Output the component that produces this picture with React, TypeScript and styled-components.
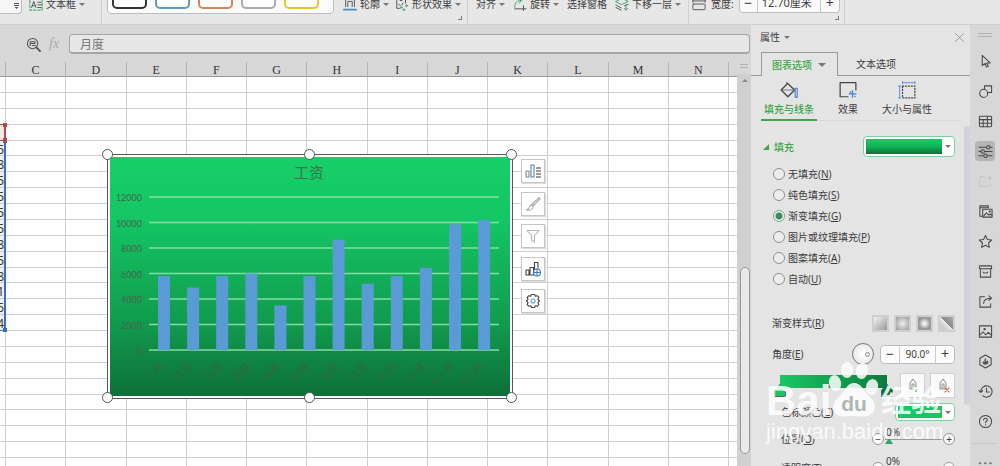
import React from "react";
import styled, { createGlobalStyle, css } from "styled-components";

const sans = `"Noto Sans", "Noto Sans CJK SC", sans-serif`;
const ink = "#3c3c3c";
const green = "#3fa648";

const Global = createGlobalStyle`
  *, *::before, *::after { box-sizing: border-box; }
  body { margin: 0; background: #e5e5e5; font-family: ${sans}; font-size: 10px; line-height: 14px; color: ${ink}; }
  button, input, select { font: inherit; color: inherit; margin: 0; padding: 0; border: 0; background: none; outline: 0; }
  button { cursor: pointer; }
`;

/* ---------- frame ---------- */
const Page = styled.div`
  display: flex;
  flex-direction: column;
  height: 100vh;
  overflow: hidden;
`;
const Body = styled.div`
  flex: 1;
  min-height: 0;
  display: flex;
`;

/* ---------- ribbon ---------- */
const Ribbon = styled.header`
  flex: none;
  height: 25px;
  display: flex;
  align-items: flex-end;
  overflow: hidden;
  background: #e7e7e7;
  border-bottom: 1px solid #cecece;
`;
const Group = styled.div<{ $gap: number; $left?: number; $right?: number; $line?: boolean }>`
  position: relative;
  flex: none;
  height: 40px;
  display: flex;
  align-items: center;
  gap: ${(p) => p.$gap}px;
  padding-left: ${(p) => p.$left ?? 0}px;
  padding-right: ${(p) => p.$right ?? 0}px;
  border-right: ${(p) => (p.$line ? "1px solid #cfcfcf" : "0")};
`;
const RibbonButton = styled.button`
  flex: none;
  display: flex;
  align-items: center;
  gap: 3px;
  white-space: nowrap;
`;
const Caret = styled.span<{ $size?: number }>`
  flex: none;
  border: ${(p) => p.$size ?? 3}px solid transparent;
  border-top-color: #777;
  border-bottom: 0;
`;
const ComboEnd = styled.button`
  align-self: flex-start;
  width: 22px;
  height: 30px;
  padding: 0 2px 4px 0;
  display: flex;
  align-items: flex-end;
  justify-content: flex-end;
  background: #f6f6f6;
  border: 1px solid #bdbdbd;
  border-left: 0;
  border-radius: 0 0 4px 0;
`;
const Gallery = styled.div`
  align-self: flex-start;
  height: 30px;
  display: flex;
  gap: 8px;
  padding: 0 14px 4px 4px;
  background: #fbfbfb;
  border: 1px solid #bdbdbd;
  border-radius: 4px;
`;
const Swatch = styled.button<{ $color: string }>`
  width: 35px;
  background: #fff;
  border: 2px solid ${(p) => p.$color};
  border-radius: 5px;
`;
const Launcher = styled.span`
  position: absolute;
  right: 5px;
  bottom: 4px;
  width: 4px;
  height: 4px;
  border: solid #777;
  border-width: 0 1px 1px 0;
`;
const WidthBox = styled.div`
  align-self: flex-start;
  height: 29px;
  padding-top: 9px;
  display: flex;
  background: #fafafa;
  border: 1px solid #bdbdbd;
  border-radius: 4px;
`;
const WidthInput = styled.input`
  width: 64px;
  padding: 0 4px;
  font-size: 11px;
  border: solid #c8c8c8;
  border-width: 0 1px;
`;
const Step = styled.button<{ $w: number }>`
  width: ${(p) => p.$w}px;
  font-size: 14px;
  line-height: 16px;
`;

/* ---------- worksheet ---------- */
const Workspace = styled.main`
  flex: 1;
  min-width: 0;
  display: flex;
  flex-direction: column;
  background: #d7d7d7;
`;
const FormulaBar = styled.div`
  flex: none;
  display: flex;
  align-items: center;
  padding: 9px 1px 8px 26px;
`;
const Fx = styled.span`
  width: 28px;
  padding-left: 8px;
  font: italic 14px "Liberation Serif", serif;
  color: #aaa;
`;
const FormulaInput = styled.input`
  flex: 1;
  min-width: 0;
  height: 20px;
  padding: 0 10px;
  font-size: 12px;
  color: #777;
  background: #e7e7e7;
  border: 1px solid #a5a5a5;
  border-bottom-width: 2px;
  border-radius: 4px;
`;
const SheetRow = styled.div`
  flex: 1;
  min-height: 0;
  display: flex;
`;
const Sheet = styled.div`
  position: relative;
  flex: 1;
  min-width: 0;
  overflow: hidden;
`;
const Table = styled.table`
  display: flex;
  flex-direction: column;
  height: calc(100% + 8px);
  thead { flex: none; display: block; }
  tbody { flex: 1; display: flex; flex-direction: column; background: #fff; }
  tr { display: flex; }
  tbody tr { flex: 1; min-height: 0; }
`;
const Head = styled.th<{ $w?: number }>`
  ${(p) => (p.$w ? css`flex: 0 0 ${p.$w}px;` : css`flex: 1;`)}
  height: 15px;
  padding: 0;
  font: 12px/17px "Liberation Serif", serif;
  color: #333;
  border-right: 1px solid #b4b4b4;
  border-bottom: 1px solid #9a9a9a;
  &:last-child { border-right: 0; }
`;
const Cell = styled.td<{ $w?: number; $fill?: string }>`
  ${(p) => (p.$w ? css`flex: 0 0 ${p.$w}px;` : css`flex: 1;`)}
  min-width: 0;
  padding: 0;
  border-right: 1px solid #cfcfcf;
  border-bottom: 1px solid #cfcfcf;
  background: ${(p) => p.$fill ?? "transparent"};
  &:last-child { border-right: 0; }
`;
const Digit = styled.span`
  display: flex;
  justify-content: flex-end;
  width: 4px;
  height: 100%;
  overflow: hidden;
  font-size: 12px;
  line-height: 18px;
`;
const Range = styled.div<{ $color: string; $top: number; $h: number }>`
  position: absolute;
  left: -10px;
  width: 16px;
  top: ${(p) => p.$top}px;
  height: ${(p) => p.$h}px;
  border: 1px solid ${(p) => p.$color};
  border-right-width: 2px;
  &::before, &::after {
    content: "";
    position: absolute;
    right: -3px;
    width: 4px;
    height: 4px;
    background: ${(p) => p.$color};
  }
  &::before { top: -2px; }
  &::after { bottom: -2px; }
`;
const Gutter = styled.div`
  flex: none;
  width: 14px;
  display: flex;
  flex-direction: column;
  align-items: center;
`;
const Grip = styled.span<{ $w: number; $top?: number }>`
  flex: none;
  width: ${(p) => p.$w}px;
  height: 4px;
  margin-top: ${(p) => p.$top ?? 0}px;
  border: solid #b3b3b3;
  border-width: 1px 0;
`;
const Track = styled.div`
  flex: 1;
  align-self: stretch;
  margin-top: 6px;
  padding: 5px 1px 12px 3px;
  display: flex;
  flex-direction: column;
  align-items: center;
  background: #d0d0d0;
`;
const ArrowUp = styled.span`
  border: 3px solid transparent;
  border-top: 0;
  border-bottom-color: #888;
`;
const Thumb = styled.div`
  align-self: stretch;
  margin-top: auto;
  height: 50%;
  background: #e9e9e9;
  border: 1px solid #999;
  border-radius: 5px;
`;

/* ---------- floating chart ---------- */
const ChartObject = styled.div`
  position: absolute;
  left: 107px;
  top: 92px;
  width: 406px;
  height: 245px;
  padding: 2px;
  background: #fff;
  border: 1px solid #555;
  svg { display: block; }
`;
const Handle = styled.span<{ $x: number; $y: number }>`
  position: absolute;
  left: ${(p) => p.$x}%;
  top: ${(p) => p.$y}%;
  width: 11px;
  height: 11px;
  margin: -6px;
  background: #fff;
  border: 1px solid #555;
  border-radius: 50%;
`;
const ChartTools = styled.div`
  position: absolute;
  left: 521px;
  top: 97px;
  height: 154px;
  display: flex;
  flex-direction: column;
  justify-content: space-between;
`;
const ChartTool = styled.button`
  width: 24px;
  height: 24px;
  display: grid;
  place-items: center;
  background: #fff;
  border: 1px solid #c6c6c6;
  box-shadow: 1px 1px 1px #ddd;
`;

/* ---------- property panel ---------- */
const Panel = styled.aside`
  position: relative;
  flex: 0 0 219px;
  display: flex;
  flex-direction: column;
  overflow: hidden;
  background: #e4e4e4;
`;
const PanelTitle = styled.div`
  flex: none;
  height: 27px;
  padding: 0 5px 3px 9px;
  display: flex;
  align-items: center;
  gap: 4px;
  button { margin-left: auto; display: flex; }
`;
const Tabs = styled.div`
  flex: none;
  height: 24px;
  display: flex;
  &::before { content: ""; width: 10px; border-bottom: 1px solid #999; }
`;
const Tab = styled.button<{ $on?: boolean }>`
  display: flex;
  align-items: center;
  gap: 6px;
  ${(p) =>
    p.$on
      ? css`
          width: 77px;
          padding-left: 10px;
          color: ${green};
          font-weight: 500;
          border: 1px solid #999;
          border-bottom: 0;
        `
      : css`
          flex: 1;
          padding-left: 18px;
          border-bottom: 1px solid #999;
        `}
`;
const SubTabs = styled.div`
  flex: none;
  display: flex;
  margin: 0 9px 0 10px;
  border-bottom: 1px solid #d8d8d8;
`;
const SubTab = styled.button<{ $on?: boolean }>`
  height: 45px;
  margin-bottom: -1px;
  padding: 5px 3px 2px;
  display: flex;
  flex-direction: column;
  align-items: center;
  gap: 3px;
  color: ${(p) => (p.$on ? green : ink)};
  font-weight: ${(p) => (p.$on ? 500 : 400)};
  border-bottom: 2px solid ${(p) => (p.$on ? green : "transparent")};
  & + & { margin-left: 18px; }
`;
const PanelBody = styled.div`
  flex: 1;
  min-height: 0;
  display: flex;
`;
const Form = styled.div`
  flex: 1;
  min-width: 0;
  padding: 15px 9px 0 21px;
`;
const PanelScroll = styled.div`
  width: 6px;
  height: 279px;
  margin-top: 5px;
  border-radius: 3px;
  background: #d2d2d8;
`;
const Line = styled.div<{ $top: number; $h: number; $indent?: number }>`
  display: flex;
  align-items: center;
  height: ${(p) => p.$h}px;
  margin-top: ${(p) => p.$top}px;
  padding-left: ${(p) => p.$indent ?? 0}px;
  > :nth-child(2) { margin-left: auto; }
`;
const Section = styled.h2`
  display: flex;
  align-items: center;
  gap: 5px;
  margin: 0 0 0 -9px;
  font-size: 10px;
  font-weight: 500;
  color: ${green};
`;
const ColorBox = styled.span<{ $w: number; $fill: string }>`
  display: flex;
  align-items: center;
  width: ${(p) => p.$w}px;
  height: 100%;
  padding: 2px 3px 2px 2px;
  background: #fdfdfd;
  border: 1px solid #7dcfa0;
  border-radius: 4px;
  select {
    flex: 1;
    min-width: 0;
    height: 100%;
    appearance: none;
    border-radius: 0;
    background: ${(p) => p.$fill};
    margin-right: 3px;
  }
`;
const Radios = styled.fieldset`
  margin: 6px 0 0 1px;
  padding: 0;
  border: 0;
`;
const RadioLine = styled.label`
  display: flex;
  align-items: center;
  gap: 3px;
  height: 21px;
`;
const Radio = styled.input`
  appearance: none;
  width: 12px;
  height: 12px;
  background: #ededed;
  border: 1px solid #8f8f8f;
  border-radius: 50%;
  &:checked {
    border-color: #6fae86;
    background: radial-gradient(#3f8a61 0 3px, #f2f2f2 4px);
  }
`;
const Styles = styled.div`
  display: flex;
  gap: 5px;
`;
const StyleButton = styled.button<{ $fill: string }>`
  width: 17px;
  height: 17px;
  background: ${(p) => p.$fill};
  border: 2px solid #cfcfcf;
`;
const Dial = styled.button`
  width: 22px;
  height: 22px;
  padding-right: 3px;
  display: flex;
  align-items: center;
  justify-content: flex-end;
  background: radial-gradient(#fff, #e2e2e2);
  border: 1px solid #777;
  border-radius: 50%;
  &::after { content: ""; width: 5px; height: 5px; border: 1px solid #888; border-radius: 50%; }
`;
const Stepper = styled.div`
  display: flex;
  height: 19px;
  margin-left: 6px;
  background: #fcfcfc;
  border: 1px solid #bbb;
  border-radius: 4px;
  input { width: 37px; text-align: center; border: solid #ccc; border-width: 0 1px; }
`;
const GradientTrack = styled.div`
  position: relative;
  flex: 1;
  align-self: flex-start;
  height: 13px;
  margin: 2px 13px 0 0;
  background: linear-gradient(90deg, #16c864, #0f7a3c);
`;
const Stop = styled.button<{ $at: number; $fill: string }>`
  position: absolute;
  left: ${(p) => p.$at}%;
  top: 9px;
  width: 12px;
  height: 13px;
  margin-left: -6px;
  background: ${(p) => p.$fill};
  border: 1px solid #666;
  clip-path: polygon(50% 0, 100% 50%, 100% 100%, 0 100%, 0 50%);
`;
const StopTool = styled.button`
  width: 25px;
  height: 25px;
  display: grid;
  place-items: center;
  background: #fafafa;
  border: 1px solid #d0d0d0;
  & + & { margin-left: 5px; }
`;
const SliderBox = styled.div`
  display: flex;
  align-items: center;
  gap: 1px;
`;
const Round = styled.button`
  width: 12px;
  height: 12px;
  display: grid;
  place-items: center;
  background: #fafafa;
  border: 1px solid #999;
  border-radius: 50%;
  line-height: 9px;
`;
const SliderTrack = styled.div`
  position: relative;
  display: flex;
  width: 57px;
  output { position: absolute; left: 1px; bottom: 6px; }
`;
const Slider = styled.input`
  appearance: none;
  width: 100%;
  height: 12px;
  background: linear-gradient(#999, #999) center / 100% 1px no-repeat;
  &::-webkit-slider-thumb {
    appearance: none;
    width: 8px;
    height: 6px;
    margin-top: 4px;
    background: #2fa56a;
    clip-path: polygon(50% 0, 100% 100%, 0 100%);
  }
`;

/* ---------- watermark ---------- */
const Watermark = styled.div`
  position: absolute;
  left: 15px;
  top: 335px;
  width: 200px;
  color: #fff;
  opacity: 0.85;
  pointer-events: none;
`;
const Brand = styled.div`
  display: flex;
  align-items: flex-end;
  height: 58px;
  font: bold 42px/34px "Liberation Sans", "Noto Sans CJK SC", sans-serif;
  svg { margin-left: -3px; }
`;
const BrandCn = styled.span`
  font-size: 30px;
  line-height: 34px;
  margin-left: 3px;
`;
const Site = styled.div`
  font: 22px/28px "Liberation Sans", sans-serif;
`;

/* ---------- side bar ---------- */
const SideBar = styled.nav`
  flex: 0 0 30px;
  display: flex;
  flex-direction: column;
  align-items: center;
  padding-top: 8px;
  overflow: hidden;
  background: #d7d7d7;
`;
const SideList = styled.div`
  flex: none;
  display: flex;
  flex-direction: column;
  gap: 10px;
  margin-top: 14px;
`;
const SideButton = styled.button<{ $on?: boolean }>`
  width: 20px;
  height: 20px;
  display: grid;
  place-items: center;
  border-radius: 4px;
  background: ${(p) => (p.$on ? "#b4b4b4" : "none")};
`;
const SideRule = styled.hr`
  flex: none;
  width: 24px;
  margin: 12px 0 14px;
  border: 0;
  border-top: 1px solid #c4c4c4;
`;

type IconProps = { children: React.ReactNode; size?: number; color?: string };
const Icon = ({ children, size = 16, color = "#555" }: IconProps) => (
  <svg width={size} height={size} viewBox="0 0 16 16" fill="none" stroke={color} strokeWidth="1.1" strokeLinejoin="round" strokeLinecap="round" style={{ flexShrink: 0 }} aria-hidden="true">
    {children}
  </svg>
);

const columns = ["C", "D", "E", "F", "G", "H", "I", "J", "K", "L", "M", "N"];
const digits = ["5", "8", "5", "5", "5", "5", "8", "5", "8", "1", "5", "4"];
const salaries = [5800, 4900, 5800, 6000, 3500, 5800, 8650, 5200, 5800, 6450, 9850, 10200];
const months = ["一月", "二月", "三月", "四月", "五月", "六月", "七月", "八月", "九月", "十月", "十一月", "十二月"];
const ticks = [0, 2000, 4000, 6000, 8000, 10000, 12000];

const scaleY = (v: number) => 193 - v * 0.01275;

const Chart = () => (
  <svg width="100%" height="100%" viewBox="0 0 400 239" role="img" aria-label="工资" fontFamily="Lato, 'Noto Sans CJK SC', sans-serif">
    <defs>
      <linearGradient id="chartFill" x1="0" y1="0" x2="0" y2="1">
        <stop offset="0" stopColor="#17cf68" />
        <stop offset="0.26" stopColor="#14c664" />
        <stop offset="0.7" stopColor="#119a4d" />
        <stop offset="1" stopColor="#0d7038" />
      </linearGradient>
    </defs>
    <rect width="400" height="239" fill="url(#chartFill)" />
    <text x="199" y="21" textAnchor="middle" fontSize="15" fill="#39734f">工资</text>
    {ticks.map((t) => (
      <g key={t}>
        <path d={`M39 ${scaleY(t)}H389`} stroke="#84dda2" strokeWidth="1.4" />
        <text x="32" y={scaleY(t) + 4} textAnchor="end" fontSize="9" fill="#46644f">{t}</text>
      </g>
    ))}
    {salaries.map((v, i) => (
      <g key={months[i]}>
        <rect x={48 + i * 29.1} y={scaleY(v)} width="12" height={193 - scaleY(v)} fill="#5b9bd5" />
        <text transform={`translate(${54 + i * 29.1} 210) rotate(-45)`} textAnchor="end" fontSize="10" fill="#37653f">{months[i]}</text>
      </g>
    ))}
  </svg>
);

const chartToolIcons: [string, React.ReactNode][] = [
  ["图表元素", <><path d="M1 8h3v6H1z" stroke="#888" /><path d="M6 2h3v12H6z" stroke="#4d85a8" /><path d="M11.500 5h4M11.500 8h4M11.500 11h4M11.500 14h4" stroke="#333" /></>],
  ["图表样式", <path d="M14.500 1.500 7 8l1.500 1.500L15 3zM6.500 9c-2 0-2 2-2.500 3s-1.500 1.500-2.500 2c3 .5 6 0 6.500-3z" stroke="#aaa" />],
  ["图表筛选", <path d="M2 2.500h12l-4.500 5V14L6.500 12V7.500z" stroke="#b5b5b5" />],
  ["在线图表", <><path d="M1 9h3v5H1zM5 6.500h3.500V14H5zM9.500 1.500H13V7" stroke="#444" /><path d="M9.500 1.500V8" stroke="#444" /><circle cx="12" cy="11.500" r="3.500" stroke="#3f7fc0" /><path d="M8.500 11.500h7M12 8v7" stroke="#3f7fc0" /></>],
  ["设置", <><path d="M6.400 1.500h3.200l.7 1.800 2-.6 1.600 2-1 1.600 1.600 1.700-1.600 1.700 1 1.600-1.600 2-2-.6-.7 1.800H6.400l-.7-1.800-2 .6-1.600-2 1-1.600L1.500 8l1.600-1.700-1-1.600 1.600-2 2 .6z" stroke="#444" /><circle cx="8" cy="8" r="2" stroke="#5a9bd0" /></>],
];

const sideIcons: [string, React.ReactNode][] = [
  ["选择", <path d="M4.500 1.500v11l3-2.500 1.500 4 2-1-1.800-3.500H13z" />],
  ["形状", <><path d="M7 5V2h7.500v7H11" /><circle cx="6" cy="10" r="4.300" /></>],
  ["表格", <><rect x="1.500" y="2.500" width="13" height="11" rx="1" /><path d="M1.500 6h13M1.500 9.800h13M5.500 6v7.500M10 2.500v11" /></>],
  ["属性", <><path d="M1 3.500h8M13 3.500h2M1 8h2M7 8h8M1 12.500h5M10 12.500h5" /><circle cx="11" cy="3.500" r="1.800" /><circle cx="5" cy="8" r="1.800" /><circle cx="8" cy="12.500" r="1.800" /></>],
  ["切换", <path d="M7 3H2v10h11V9M9 4.500h5M12 2.500l2 2-2 2M6 9v-1" stroke="#c3c3c3" strokeDasharray="2 1" />],
  ["图库", <><path d="M4 13H2V2h9v2M2 4h9" /><path d="M5 5.500h10V14H5z" /><path d="m6 13 3-3.500 2.500 2.500 1.500-1.500 2 2" /><circle cx="12.500" cy="8" r=".6" /></>],
  ["收藏", <path d="m8 1.500 2 4.300 4.600.6-3.400 3.200.9 4.700L8 12l-4.100 2.300.9-4.700L1.400 6.400 6 5.800z" />],
  ["归档", <><rect x="1.500" y="2" width="13" height="3" rx=".8" /><path d="M2.500 5v9h11V5M5.500 8.500c0 1.500 5 1.500 5 0" /></>],
  ["分享", <path d="M7 3H2v11h11.500v-3.500M6 10c0-4 3-5.500 8-5.500M11.500 2 14.500 4.500l-3 2.500" />],
  ["图片", <><rect x="1.500" y="2" width="13" height="12" /><path d="m2 11.500 3.500-3 2.500 3 3-2.500 3.500 3" /><circle cx="7" cy="5.500" r=".7" fill="#444" /></>],
  ["素材", <><path d="m8 1 6 3.500v7L8 15l-6-3.500v-7z" /><path d="M8.500 4.500c1 2-1 2.500 0 3.500 1 0 1.500-1 1.500-1.500 2 2.500 1 5-2 5s-3.500-2.500-2.500-4c.5 1 1 1 1.500.5C6.500 6.500 7 5 8.500 4.500z" fill="#555" stroke="none" /></>],
  ["历史", <path d="M3 8a6 6 0 1 1 2 4.500M1 7l2 2 2-2M9 4.500V8.500h3" />],
  ["帮助", <><circle cx="8" cy="8" r="6.500" /><path d="M6 6.300c0-2.500 4-2.500 4 0 0 1.400-2 1.500-2 3M8 11.500v.3" /></>],
];

const fills: [string, string][] = [
  ["无填充", "N"], ["纯色填充", "S"], ["渐变填充", "G"], ["图片或纹理填充", "P"], ["图案填充", "A"], ["自动", "U"],
];

const Key = ({ children }: { children: string }) => <>(<u>{children}</u>)</>;

const ColorSelect = ({ id, w, fill, label }: { id: string; w: number; fill: string; label?: string }) => (
  <ColorBox $w={w} $fill={fill}>
    <select id={id} aria-label={label}><option aria-label="绿色" /></select>
    <Caret $size={3} />
  </ColorBox>
);

const Percent = ({ id }: { id: string }) => (
  <SliderBox>
    <Round aria-label="减少">−</Round>
    <SliderTrack>
      <output htmlFor={id}>0%</output>
      <Slider id={id} type="range" min={0} max={100} defaultValue={0} />
    </SliderTrack>
    <Round aria-label="增加">+</Round>
  </SliderBox>
);

export default function App() {
  return (
    <Page>
      <Global />
      <Ribbon>
        <Group $gap={7} $right={16} $line>
          <ComboEnd aria-label="更多">
            <svg width="5" height="6" viewBox="0 0 5 6"><path d="M0 .5h5M0 2.500h5z" stroke="#555" /><path d="M.5 4h4L2.500 6z" fill="#555" /></svg>
          </ComboEnd>
          <RibbonButton>
            <Icon size={14}><rect x="1" y="1" width="14" height="14" stroke="#3b9b5e" strokeDasharray="3 2" /><path d="m3 12 2.500-7L8 12M4 10h3M10 6h4M10 9h4M10 12h4" /></Icon>
            文本框<Caret />
          </RibbonButton>
        </Group>
        <Group $gap={8} $left={5}>
          <Gallery>
            {["#333", "#5b9bc8", "#dc8458", "#ababab", "#e8c52c"].map((c) => <Swatch key={c} $color={c} aria-label="形状样式" />)}
          </Gallery>
        </Group>
        <Group $gap={6} $left={9} $right={6} $line>
          <RibbonButton>
            <Icon size={14}><path d="M3 11V2h10v9M5.500 11V5h5v6" /><path d="M1 14.500h14" stroke="#4a8fc4" strokeWidth="2" /></Icon>
            轮廓<Caret />
          </RibbonButton>
          <RibbonButton>
            <Icon size={14}><path d="M2 4v9h3M6 4h2M12 3v4" /><path d="m4 8 2 2M9 7l-1 2" /><circle cx="7" cy="12" r="1" stroke="#3ba568" /><circle cx="13" cy="10" r="1" stroke="#3ba568" /><circle cx="10" cy="14.500" r="1" stroke="#3ba568" /></Icon>
            形状效果<Caret />
          </RibbonButton>
          <Launcher />
        </Group>
        <Group $gap={8} $left={8} $right={7} $line>
          <RibbonButton>对齐<Caret /></RibbonButton>
          <RibbonButton>
            <Icon size={14}><path d="M2 12C2 6 5 4 9 4M7 1l3 3-3 3" stroke="#3ba568" /><path d="M2 13.500h13M12 10v6" /></Icon>
            旋转<Caret />
          </RibbonButton>
          <RibbonButton>选择窗格</RibbonButton>
          <RibbonButton>
            <Icon size={14}><path d="m1 5 7-3.500L15 5 8 8.500z" stroke="#3ba568" /><path d="m1 9 6 3.500M1 12l6 3M15 8.500 11 10" /><path d="M12.500 9v6m-2-2 2 2 2-2" stroke="#3ba568" /></Icon>
            下移一层<Caret />
          </RibbonButton>
        </Group>
        <Group $gap={5} $left={3} $right={4} $line>
          <Icon size={14}><rect x="1" y="8" width="14" height="6.500" rx="1" /><path d="M1 3v3M15 3v3M1 4.500h14" /></Icon>
          <label htmlFor="width">宽度:</label>
          <WidthBox>
            <Step $w={17} aria-label="减小宽度">−</Step>
            <WidthInput id="width" defaultValue="12.70厘米" />
            <Step $w={18} aria-label="增大宽度">+</Step>
          </WidthBox>
          <Launcher />
        </Group>
      </Ribbon>

      <Body>
        <Workspace>
          <FormulaBar>
            <Icon size={15}><circle cx="7" cy="7" r="5.500" /><path d="m11 11 4 4" strokeWidth="2" /><path d="M4.500 9V5h5v2h-4M7 9h3" /></Icon>
            <Fx>fx</Fx>
            <FormulaInput aria-label="编辑栏" defaultValue="月度" />
          </FormulaBar>
          <SheetRow>
            <Sheet>
              <Table>
                <thead>
                  <tr>
                    <Head $w={6} />
                    {columns.map((c) => <Head key={c} scope="col">{c}</Head>)}
                    <Head $w={8} />
                  </tr>
                </thead>
                <tbody>
                  {Array.from({ length: 25 }, (_, r) => (
                    <tr key={r}>
                      <Cell $w={6} $fill={r === 3 ? "#f6e6e6" : r > 3 && r < 16 ? "#e9eef8" : undefined}>
                        {r > 3 && r < 16 && <Digit>{digits[r - 4]}</Digit>}
                      </Cell>
                      {columns.map((c) => <Cell key={c} />)}
                      <Cell $w={8} />
                    </tr>
                  ))}
                </tbody>
              </Table>
              <Range $color="#3f6fb0" $top={78} $h={191} />
              <Range $color="#b04a4a" $top={62} $h={17} />
              <ChartObject>
                <Chart />
                {[[0, 0], [50, 0], [100, 0], [0, 100], [50, 100], [100, 100]].map(([x, y]) => <Handle key={`${x}-${y}`} $x={x} $y={y} />)}
              </ChartObject>
              <ChartTools>
                {chartToolIcons.map(([name, art]) => <ChartTool key={name} aria-label={name}><Icon>{art}</Icon></ChartTool>)}
              </ChartTools>
            </Sheet>
            <Gutter>
              <Grip $w={8} $top={2} />
              <Track><ArrowUp /><Thumb /></Track>
            </Gutter>
          </SheetRow>
        </Workspace>

        <Panel>
          <PanelTitle>
            属性<Caret />
            <button aria-label="关闭"><Icon size={11} color="#888"><path d="m2 2 12 12M14 2 2 14" /></Icon></button>
          </PanelTitle>
          <Tabs>
            <Tab $on>图表选项<Caret $size={4} /></Tab>
            <Tab>文本选项</Tab>
          </Tabs>
          <SubTabs>
            <SubTab $on>
              <Icon size={18} color="#444"><path d="M6 1.500 13 8l-6 6-6-6 5.500-5.500" /><path d="M2 8h10" strokeWidth=".6" /><path d="M13.500 6.500h1.800v8h-1.800z" stroke="#5b86d8" /></Icon>
              填充与线条
            </SubTab>
            <SubTab>
              <Icon size={18} color="#444"><path d="M8 14H1V1.500h14V8" /><path d="M12 8.500v6M9 11.500h6M10 9.500l.5.5M14 13.500l.3.3" stroke="#4d7fd0" /></Icon>
              效果
            </SubTab>
            <SubTab>
              <Icon size={18} color="#444"><path d="M4 4.500h11V15H4z" strokeDasharray="1 1.600" /><path d="M4 1.500h11M1.500 4.500V15M4 .5v2M15 .5v2M.5 4.500h2M.5 15h2" stroke="#5b86d8" strokeWidth=".8" /></Icon>
              大小与属性
            </SubTab>
          </SubTabs>
          <PanelBody>
            <Form>
              <Line $top={0} $h={21}>
                <Section><svg width="6" height="6"><path d="M6 0v6H0z" fill={green} /></svg>填充</Section>
                <ColorSelect id="fill" label="填充" w={92} fill="linear-gradient(#17cb66, #12b458 50%, #0d7038)" />
              </Line>
              <Radios aria-label="填充">
                {fills.map(([name, key]) => (
                  <RadioLine key={key}>
                    <Radio type="radio" name="fillKind" defaultChecked={key === "G"} />
                    <span>{name}<Key>{key}</Key></span>
                  </RadioLine>
                ))}
              </Radios>
              <Line $top={25} $h={18}>
                <span>渐变样式<Key>R</Key></span>
                <Styles>
                  <StyleButton aria-label="线性" $fill="linear-gradient(135deg, #f2f2f2, #999)" />
                  <StyleButton aria-label="射线" $fill="radial-gradient(#eee, #999)" />
                  <StyleButton aria-label="矩形" $fill="radial-gradient(#eee 15%, #999 60%)" />
                  <StyleButton aria-label="路径" $fill="linear-gradient(45deg, #ccc 25%, #e8e8e8 50%, #888 52%, #aaa)" />
                </Styles>
              </Line>
              <Line $top={12} $h={20}>
                <label htmlFor="angle">角度<Key>E</Key></label>
                <Dial aria-label="旋转角度" />
                <Stepper>
                  <Step $w={18} aria-label="减小角度">−</Step>
                  <input id="angle" defaultValue="90.0°" />
                  <Step $w={18} aria-label="增大角度">+</Step>
                </Stepper>
              </Line>
              <Line $top={9} $h={24} $indent={8}>
                <GradientTrack>
                  <Stop aria-label="起始色标" $at={0} $fill="#14c664" />
                  <Stop aria-label="结束色标" $at={100} $fill="#0d7038" />
                </GradientTrack>
                <StopTool aria-label="添加色标"><Icon><path d="M5 12V6l3-4 3 4v6zM7 12V7h2v5" stroke="#999" /><path d="M11 10v5M8.500 12.500h5" stroke="#5aa83c" /></Icon></StopTool>
                <StopTool aria-label="删除色标"><Icon><path d="M5 12V6l3-4 3 4v6zM7 12V7h2v5" stroke="#999" /><path d="m10 11 4 4m0-4-4 4" stroke="#e0683c" /></Icon></StopTool>
              </Line>
              <Line $top={6} $h={18} $indent={9}>
                <label htmlFor="stopColor">色标颜色<Key>C</Key></label>
                <ColorSelect id="stopColor" w={60} fill="#14c664" />
              </Line>
              <Line $top={8} $h={20} $indent={9}>
                <label htmlFor="position">位置<Key>O</Key></label>
                <Percent id="position" />
              </Line>
              <Line $top={9} $h={20} $indent={9}>
                <label htmlFor="opacity">透明度<Key>T</Key></label>
                <Percent id="opacity" />
              </Line>
            </Form>
            <PanelScroll />
          </PanelBody>
          <Watermark>
            <Brand>
              Bai
              <svg width="50" height="58" viewBox="0 0 50 58">
                <g fill="#fff">
                  <ellipse cx="7" cy="23" rx="6" ry="8" transform="rotate(-12 7 23)" />
                  <ellipse cx="19" cy="10" rx="6" ry="8" />
                  <ellipse cx="34" cy="11" rx="6" ry="8" transform="rotate(12 34 11)" />
                  <ellipse cx="44" cy="27" rx="6" ry="8" transform="rotate(12 44 27)" />
                  <path d="M26 23c7 0 9 7 15 13 6 5 7 10 5 15-3 6-10 6-20 5-10 1-18 1-20-5-2-5 0-10 5-14 6-6 8-14 15-14z" />
                </g>
                <text x="26" y="51" textAnchor="middle" fontFamily="Liberation Sans, sans-serif" fontWeight="bold" fontSize="21" fill="#a5b0a8">du</text>
              </svg>
              <BrandCn>经验</BrandCn>
            </Brand>
            <Site>jingyan.baidu.com</Site>
          </Watermark>
        </Panel>

        <SideBar aria-label="任务窗格">
          <Grip $w={14} />
          <SideList>
            {sideIcons.map(([name, art]) => (
              <SideButton key={name} $on={name === "属性"} aria-label={name}><Icon size={15} color="#484848">{art}</Icon></SideButton>
            ))}
          </SideList>
          <SideRule />
          <Icon size={14} color="#777"><path d="M2 6h.5M8 6h.5M14 6h.5" strokeWidth="2.500" /></Icon>
        </SideBar>
      </Body>
    </Page>
  );
}
